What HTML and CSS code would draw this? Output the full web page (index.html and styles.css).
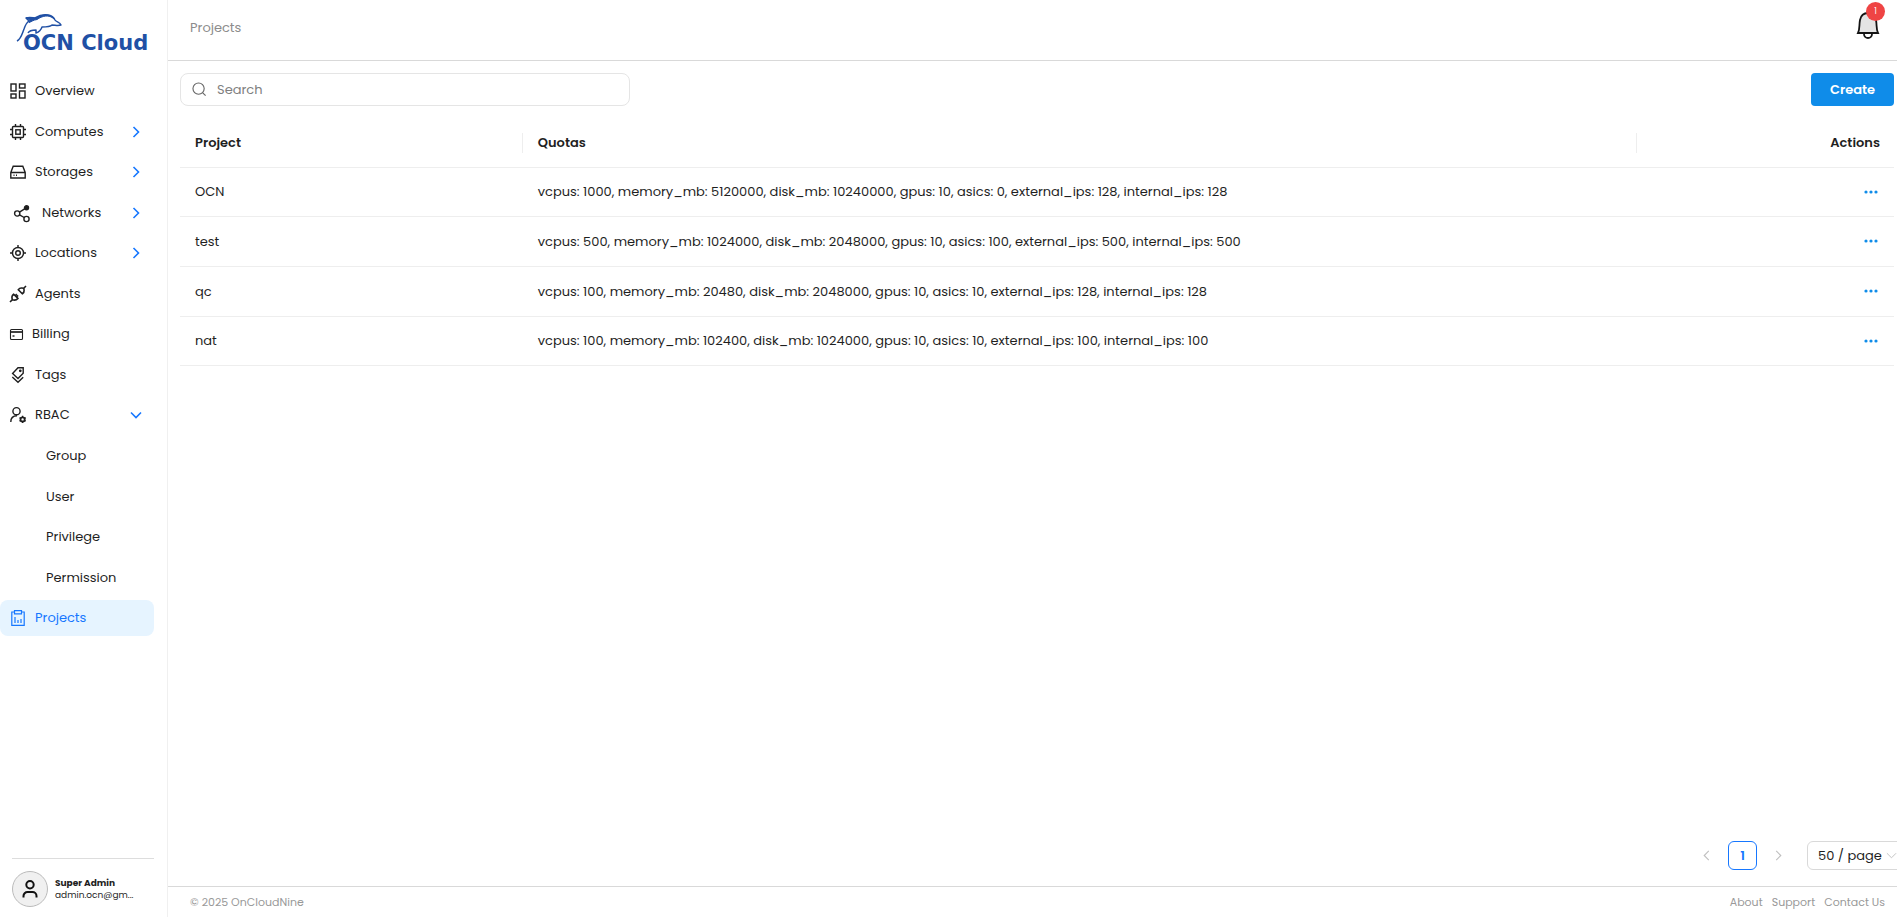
FILE: index.html
```html
<!DOCTYPE html>
<html lang="en">
<head>
<meta charset="utf-8">
<title>Projects - OCN Cloud</title>
<link rel="stylesheet" href="styles.css">
</head>
<body>
<svg class="defs" aria-hidden="true">
  <symbol id="right" viewBox="0 0 12 12"><path d="M3.5 1l5 5-5 5"/></symbol>
  <symbol id="left" viewBox="0 0 12 12"><path d="M8.500 1l-5 5 5 5"/></symbol>
  <symbol id="down" viewBox="0 0 12 12"><path d="M1 3.500l5 5 5-5"/></symbol>
  <symbol id="dots" viewBox="0 0 14 4"><circle cx="2" cy="2" r="1.600"/><circle cx="7" cy="2" r="1.600"/><circle cx="12" cy="2" r="1.600"/></symbol>
</svg>
<div class="app">
  <aside class="sidebar">
    <a class="logo" href="#" aria-label="OCN Cloud">
      <svg class="dolphin" viewBox="0 0 46 28" aria-hidden="true">
        <path d="M1 27C5 25 6 20 8 15C9 12 10 9 13 7L10 4C14 3 17 4 19 4C27-1 37 0 39 6C40 8 44 8 45 11C42 12 39 11 36 11C34 13 30 13 26 13C25 16 23 18 20 19L20 16C16 16 13 17 12 19" fill="none" stroke="#2050a5" stroke-width="1.500" stroke-linejoin="round"/>
        <path d="M10 4C14 3 17 4 20 4C26 0 35-1 38 5C33 0 26 2 21 5.500C17 6 15 8 13 8.500L14 6z" fill="#2050a5"/>
      </svg>
      <span class="logo-text">OCN Cloud</span>
    </a>
    <nav class="menu">
      <a class="item" href="#"><svg class="icon" viewBox="0 0 16 16"><rect x="1" y="1" width="5" height="7"/><rect x="9.500" y="1" width="5.500" height="4"/><rect x="1" y="11" width="5" height="4"/><rect x="9.500" y="8" width="5.500" height="7"/></svg>Overview</a>
      <button class="item"><svg class="icon" viewBox="0 0 16 16"><rect x="2.500" y="2.500" width="11" height="11" rx="1"/><rect x="5.800" y="5.800" width="4.400" height="4.400"/><path d="M5.500 0v2M10.500 0v2M5.500 14v2M10.500 14v2M0 5.500h2M0 10.500h2M14 5.500h2M14 10.500h2"/></svg>Computes<svg class="arrow"><use href="#right"/></svg></button>
      <button class="item"><svg class="icon" viewBox="0 0 16 16"><path d="M.8 8.500l2.400-6.200h9.600l2.400 6.200v5.500H.8zM.8 8.500h14.400M3.500 11.300h1M6 11.300h1"/></svg>Storages<svg class="arrow"><use href="#right"/></svg></button>
      <button class="item network"><svg class="icon" viewBox="0 0 16 16"><circle cx="3.200" cy="8.500" r="2.600"/><circle cx="12.500" cy="2.800" r="2" fill="currentColor"/><circle cx="12.500" cy="14" r="2.600"/><path d="M5.500 7.200l5.500-3.500M5.500 9.800l4.700 2.700"/></svg>Networks<svg class="arrow"><use href="#right"/></svg></button>
      <button class="item"><svg class="icon" viewBox="0 0 16 16"><circle cx="8" cy="8" r="5.500"/><circle cx="8" cy="8" r="2.300"/><path d="M8 0v2.500M8 13.500V16M0 8h2.500M13.500 8H16"/></svg>Locations<svg class="arrow"><use href="#right"/></svg></button>
      <a class="item" href="#"><svg class="icon" viewBox="0 0 16 16"><path d="M8.300 3.800l4 4c1.300-1 2-2 1.800-3.300L13.800 2.200 11.500 2C10.200 1.900 9.200 2.500 8.300 3.800zM13.800 2.200L16 0M3.700 8.200l4.200 4.200C6.600 14 4.500 14.500 2.400 13.700C1.500 11.500 2 9.500 3.700 8.200zM2.400 13.700L0 16M5.200 9.700l1.600-1.600M6.500 11l1.600-1.600" stroke-width="1.600"/></svg>Agents</a>
      <a class="item billing" href="#"><svg class="icon" viewBox="0 0 13 13"><rect x=".5" y="1.500" width="12" height="10" rx="1" stroke-width="1.100"/><path d="M.5 4h12" stroke-width="1.700"/><path d="M2.500 8h2" stroke-width="1.400"/></svg>Billing</a>
      <a class="item" href="#"><svg class="icon" viewBox="0 0 16 16"><path d="M8 .8h5.200v5.400L8 11.500 2.600 6.400zM2.300 10l5.700 5.300 5.200-5"/><circle cx="10.300" cy="3.800" r=".7" fill="currentColor"/></svg>Tags</a>
      <button class="item" aria-expanded="true"><svg class="icon" viewBox="0 0 16 16"><circle cx="6.500" cy="4.200" r="3.600"/><path d="M.8 15c0-4 2.400-6.200 6.200-6.200"/><circle cx="12.600" cy="12.400" r="2.100" stroke-width="1.800"/><path d="M12.600 8.800v1.400M12.600 14.600V16M9.500 10.600l1.200.7M14.500 13.500l1.200.7M9.500 14.200l1.200-.7M14.500 11.300l1.200-.7"/></svg>RBAC<svg class="arrow"><use href="#down"/></svg></button>
      <div class="submenu">
        <a class="item" href="#">Group</a>
        <a class="item" href="#">User</a>
        <a class="item" href="#">Privilege</a>
        <a class="item" href="#">Permission</a>
      </div>
      <a class="item active" href="#"><svg class="icon" viewBox="0 0 16 16"><path d="M4.500 2H1.800v13.300h12.400V2h-2.700M4.500.6h7v3.200h-7zM5 7v6M8 10v3M11 9v4"/></svg>Projects</a>
    </nav>
    <div class="user">
      <span class="avatar"><svg viewBox="0 0 16 18" aria-hidden="true"><circle cx="8" cy="4.700" r="3.700"/><path d="M1.500 17.500v-1.500a4 4 0 0 1 4-4h5a4 4 0 0 1 4 4v1.500"/></svg></span>
      <div class="who"><strong>Super Admin</strong><span>admin.ocn@gm...</span></div>
    </div>
  </aside>
  <div class="main">
    <header class="topbar">
      <span class="crumb">Projects</span>
      <button class="bell" aria-label="Notifications"><svg viewBox="0 0 24 28" aria-hidden="true"><path d="M8 23a4 4 0 0 0 8 0" fill="#fff"/><path d="M2 22C4 18 3 14 4 9C5 4 8 2 12 2s7 2 8 7c1 5 0 9 2 13z" fill="#e4e4e4"/></svg><span class="badge">1</span></button>
    </header>
    <main class="content">
      <div class="tools">
        <label class="search"><svg viewBox="0 0 16 16" aria-hidden="true"><circle cx="7" cy="7" r="6"/><path d="M11.500 11.500l3 3"/></svg><input type="search" placeholder="Search" aria-label="Search"></label>
        <button class="create">Create</button>
      </div>
      <table class="projects">
        <thead><tr><th class="c-name">Project</th><th class="c-quota">Quotas</th><th class="c-act">Actions</th></tr></thead>
        <tbody>
          <tr><td>OCN</td><td>vcpus: 1000, memory_mb: 5120000, disk_mb: 10240000, gpus: 10, asics: 0, external_ips: 128, internal_ips: 128</td><td><button class="more" aria-label="More"><svg><use href="#dots"/></svg></button></td></tr>
          <tr><td>test</td><td>vcpus: 500, memory_mb: 1024000, disk_mb: 2048000, gpus: 10, asics: 100, external_ips: 500, internal_ips: 500</td><td><button class="more" aria-label="More"><svg><use href="#dots"/></svg></button></td></tr>
          <tr><td>qc</td><td>vcpus: 100, memory_mb: 20480, disk_mb: 2048000, gpus: 10, asics: 10, external_ips: 128, internal_ips: 128</td><td><button class="more" aria-label="More"><svg><use href="#dots"/></svg></button></td></tr>
          <tr><td>nat</td><td>vcpus: 100, memory_mb: 102400, disk_mb: 1024000, gpus: 10, asics: 10, external_ips: 100, internal_ips: 100</td><td><button class="more" aria-label="More"><svg><use href="#dots"/></svg></button></td></tr>
        </tbody>
      </table>
      <div class="pager">
        <button class="page" aria-label="Previous page"><svg><use href="#left"/></svg></button>
        <button class="page current">1</button>
        <button class="page" aria-label="Next page"><svg><use href="#right"/></svg></button>
        <div class="size"><select aria-label="Page size"><option>50 / page</option></select><svg><use href="#down"/></svg></div>
      </div>
    </main>
    <footer class="footer">
      <span>© 2025 OnCloudNine</span>
      <nav><a href="#">About</a><a href="#">Support</a><a href="#">Contact Us</a></nav>
    </footer>
  </div>
</div>
</body>
</html>
```
FILE: styles.css
```css
* { box-sizing: border-box; }
body {
  margin: 0;
  font-family: Poppins, Inter, "Open Sans", sans-serif;
  font-size: 13px;
  line-height: 20px;
  color: #1f1f1f;
  background: #fff;
}
a { color: inherit; text-decoration: none; }
button, input, select { font: inherit; color: inherit; }
button { border: 0; padding: 0; background: none; cursor: pointer; }
svg { flex: none; fill: none; stroke: currentColor; overflow: visible; }
.defs { position: absolute; width: 0; height: 0; }

.app { display: flex; height: 100vh; overflow: hidden; }

.sidebar {
  flex: none;
  display: flex;
  flex-direction: column;
  width: 168px;
  border-right: 1px solid #f0f0f0;
}
.logo {
  position: relative;
  height: 73px;
  padding: 33px 0 0 23px;
  color: #2050a5;
}
.dolphin { position: absolute; left: 16px; top: 14px; width: 46px; height: 28px; }
.logo-text { font: bold 21px/20px "DejaVu Sans", sans-serif; white-space: nowrap; }

.menu { display: flex; flex-direction: column; gap: 4px; padding-right: 13px; }
.item {
  display: flex;
  align-items: center;
  gap: 9px;
  width: 100%;
  height: 36px;
  padding: 0 12px 0 10px;
  border-radius: 8px;
  text-align: left;
}
.item:nth-child(even) { height: 37px; }
.network { padding-left: 14px; gap: 12px; }
.billing { padding-left: 10px; }
.icon { width: 16px; height: 16px; stroke-width: 1.4; }
.billing .icon { width: 13px; height: 13px; }
.arrow { width: 12px; height: 12px; margin-left: auto; color: #1677ff; stroke-width: 1.6; }
.submenu { display: flex; flex-direction: column; gap: 4px; margin-top: 1px; }
.submenu .item { padding-left: 46px; }
.active { background: #e6f4ff; color: #1677ff; }
.active .icon { stroke-width: 1.2; }

.user {
  display: flex;
  gap: 7px;
  align-items: center;
  margin: auto 13px 10px 12px;
  padding-top: 12px;
  border-top: 1px solid #ddd;
}
.avatar {
  display: grid;
  place-items: center;
  flex: none;
  width: 36px;
  height: 36px;
  border: 1px solid #bbb;
  border-radius: 50%;
  background: #f0f0f0;
  color: #111;
}
.avatar svg { width: 16px; height: 18px; stroke-width: 2; }
.who { display: flex; flex-direction: column; font-size: 9px; line-height: 12px; white-space: nowrap; }

.main { flex: 1; min-width: 0; display: flex; flex-direction: column; }
.topbar {
  display: flex;
  justify-content: space-between;
  height: 61px;
  padding: 0 17px 0 22px;
  border-bottom: 1px solid #d9d9d9;
}
.crumb { padding-top: 18px; color: #8c8c8c; }
.bell { position: relative; align-self: flex-start; width: 24px; height: 28px; margin-top: 11px; color: #141414; }
.bell svg { display: block; width: 24px; height: 28px; stroke-width: 1.8; }
.badge {
  position: absolute;
  top: -9px;
  right: -5px;
  width: 19px;
  height: 19px;
  border-radius: 50%;
  background: #ef4444;
  color: #fff;
  font-size: 8px;
  line-height: 19px;
}

.content { flex: 1; display: flex; flex-direction: column; padding: 12px 3px 0 12px; }
.tools { display: flex; justify-content: space-between; }
.search {
  display: flex;
  align-items: center;
  gap: 10px;
  width: 450px;
  height: 33px;
  padding: 0 11px;
  border: 1px solid #e5e5e5;
  border-radius: 8px;
  color: #666;
}
.search svg { width: 15px; height: 15px; stroke-width: 1.2; }
.search input { flex: 1; min-width: 0; border: 0; outline: 0; padding: 0; background: none; }
.search input::placeholder { color: #808080; opacity: 1; }
.create {
  width: 83px;
  height: 33px;
  border-radius: 4px;
  background: #0f8ce9;
  color: #fff;
  font-weight: 600;
}

.projects { width: 100%; margin-top: 12px; border-collapse: separate; border-spacing: 0; table-layout: fixed; }
.c-name { width: 20%; }
.c-quota { width: 65%; }
.c-act { width: 15%; }
.projects th, .projects td {
  padding: 14px 15px;
  border-bottom: 1px solid #eee;
  text-align: left;
  line-height: 21px;
}
.projects th { font-weight: 600; background: linear-gradient(#eee, #eee) right center / 1px 20px no-repeat; }
.projects tr:nth-child(3n+1) td { line-height: 20px; }
.projects th.c-act { background: none; }
.projects th:last-child, .projects td:last-child { padding-right: 14px; text-align: right; }
.more { display: inline-grid; place-items: center; height: 20px; color: #0f8ce9; vertical-align: top; }
.more svg { width: 14px; height: 4px; margin-right: 2px; fill: currentColor; stroke: none; }

.pager {
  display: flex;
  justify-content: flex-end;
  align-items: center;
  gap: 21px;
  margin: auto -12px 16px 0;
}
.page { display: grid; place-items: center; width: 29px; height: 29px; border-radius: 6px; color: #bfbfbf; }
.page svg { width: 11px; height: 11px; stroke-width: 1.2; }
.current { margin: 0 -14px; border: 1px solid #1677ff; color: #1677ff; font-weight: 600; }
.size { position: relative; width: 99px; height: 29px; margin-left: -7px; }
.size select {
  appearance: none;
  width: 100%;
  height: 100%;
  padding: 0 10px;
  border: 1px solid #d9d9d9;
  border-radius: 6px;
  background: #fff;
}
.size svg { position: absolute; right: 9px; top: 9px; width: 11px; height: 11px; color: #bfbfbf; pointer-events: none; }

.footer {
  display: flex;
  justify-content: space-between;
  height: 31px;
  padding: 5px 12px 0 22px;
  border-top: 1px solid #d9d9d9;
  color: #999;
  font-size: 11px;
}
.footer nav { display: flex; gap: 9px; }
```
